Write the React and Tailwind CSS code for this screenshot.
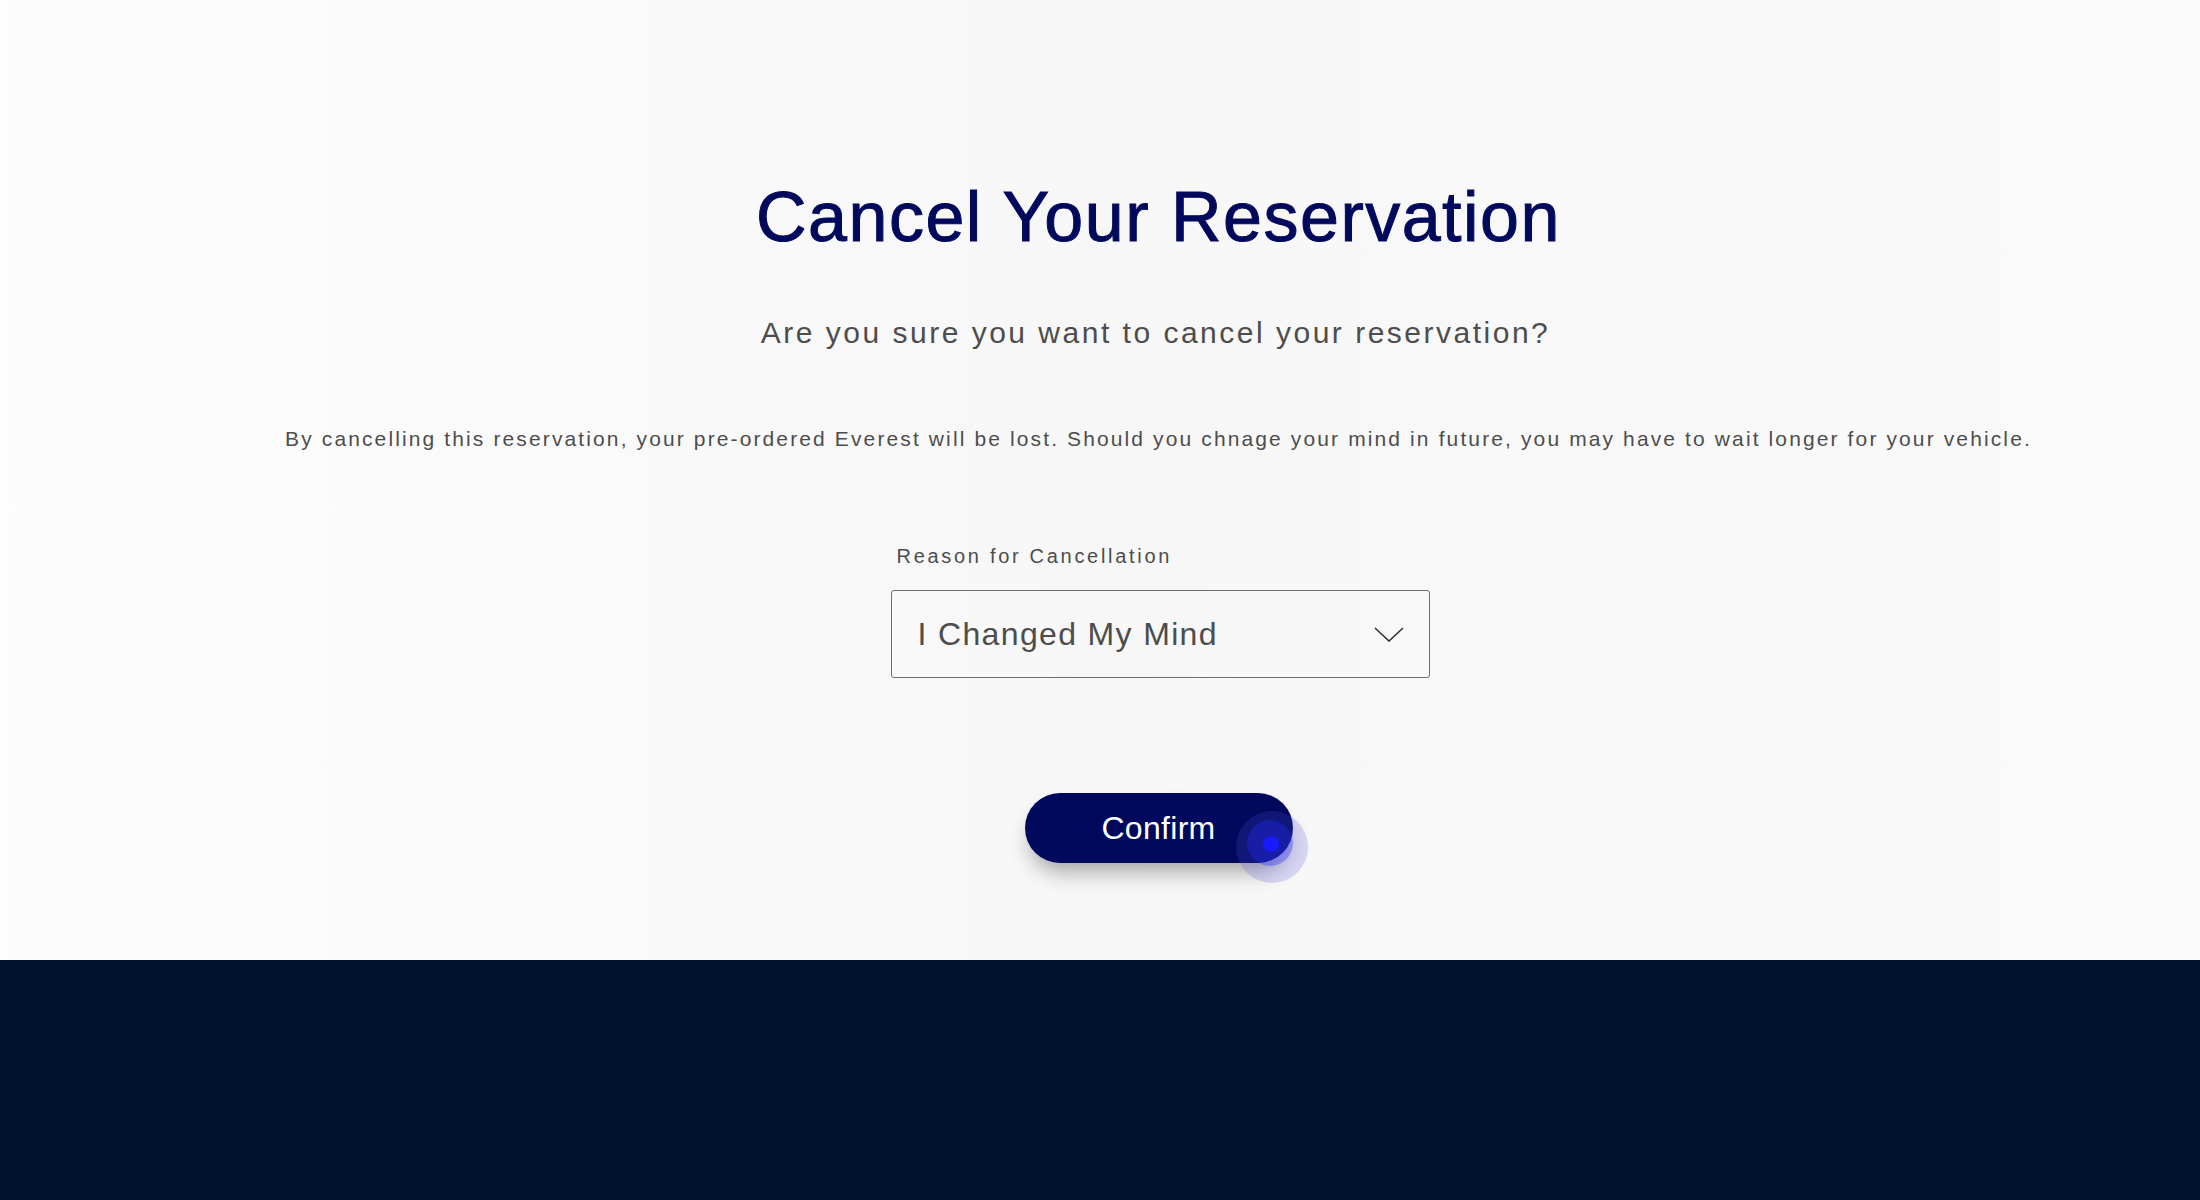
// Cancel reservation page
export default function App() {
  return (
    <div className="min-h-screen flex flex-col font-['Liberation_Sans',Arial,sans-serif]">
      {/* Main content */}
      <main className="h-[960px] bg-gradient-to-r from-[#fdfdfd] via-[#f7f7f7] to-[#fafafa] flex flex-col items-center pl-[117px]">
        <h1 className="mt-[182px] text-[70px] leading-[70px] tracking-[1.5px] text-[#00095b] [-webkit-text-stroke:1px_#00095b]">
          Cancel Your Reservation
        </h1>
        <p className="mt-[66px] mr-[6px] text-[30px] leading-[30px] tracking-[2.5px] text-[#4d4d4d]">
          Are you sure you want to cancel your reservation?
        </p>
        <p className="mt-[80px] text-[21px] leading-[21px] tracking-[2.12px] text-[#4d4d4d]">
          By cancelling this reservation, your pre-ordered Everest will be lost. Should you chnage your mind in future, you may have to wait longer for your vehicle.
        </p>

        {/* Reason select */}
        <div className="mt-[97px] ml-[3px] w-[539px] flex flex-col">
          <label className="pl-[6px] text-[20px] leading-[20px] tracking-[2.7px] text-[#4d4d4d]">
            Reason for Cancellation
          </label>
          <div className="mt-[24px] h-[88px] border border-[#6f6f6f] rounded-[3px] flex items-center justify-between pl-[26px] pr-[25px]">
            <span className="text-[32px] leading-[32px] tracking-[1.35px] text-[#4d4d4d]">I Changed My Mind</span>
            <svg width="30" height="15" viewBox="0 0 30 15" fill="none">
              <polyline points="1,1 15,14 29,1" stroke="#333" strokeWidth="1.6" />
            </svg>
          </div>
        </div>

        <button className="relative mt-[115px] w-[268px] h-[70px] rounded-full bg-[#00095b] text-white text-[32px] leading-[32px] tracking-[0.3px] shadow-[0_14px_22px_-6px_rgba(0,0,0,0.35)] flex items-center justify-center">
          Confirm
          <span className="absolute left-[211px] top-[18px] w-[72px] h-[72px] rounded-full bg-[rgba(80,80,230,0.2)]" />
          <span className="absolute left-[222px] top-[27px] w-[46px] h-[46px] rounded-full bg-[rgba(40,40,255,0.35)]" />
          <span className="absolute left-[238px] top-[43px] w-[16px] h-[16px] rounded-full bg-[#1a1aff]" />
        </button>
      </main>

      {/* Footer */}
      <footer className="h-[240px] bg-[#00142e]" />
    </div>
  );
}
